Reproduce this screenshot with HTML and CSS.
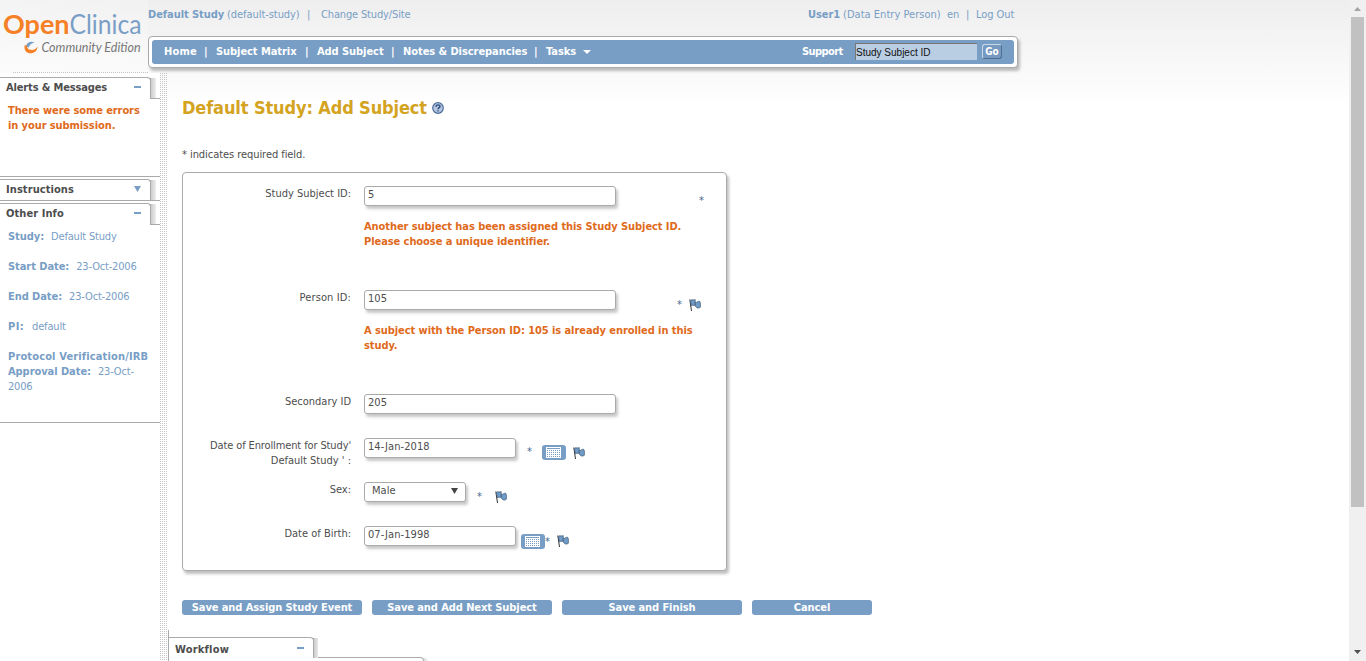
FILE: index.html
```html
<!DOCTYPE html>
<html lang="en">
<head>
<meta charset="utf-8">
<title>OpenClinica - Add Subject</title>
<link rel="stylesheet" href="styles.css">
</head>
<body>
<svg class="defs" width="0" height="0" aria-hidden="true">
  <defs>
    <symbol id="flag" viewBox="0 0 12 12">
      <path d="M.8 .5L2.500 12" stroke="#333" stroke-width="1" fill="none"/>
      <path d="M1.500 1.200C3 .2 4.500 1.600 6.200 .6V6C4.800 7.200 3.400 5.600 2.200 6.800Z" fill="#6f9bc8" stroke="#3f566e" stroke-width=".7"/>
      <path d="M6.400 3.200C7.500 4.200 9 1.500 10.800 2.400C11.700 4.500 11.500 6.500 11.300 8.300C9.800 9.500 8.200 9.500 6.300 7.300Z" fill="#6f9bc8" stroke="#3f566e" stroke-width=".7"/>
    </symbol>
    <pattern id="dots" width="2" height="2" patternUnits="userSpaceOnUse" x="4" y="4">
      <rect width="1" height="1" x="1" y="1" fill="#789ec5"/>
    </pattern>
    <symbol id="calendar" viewBox="0 0 24 15">
      <rect width="24" height="15" rx="3" fill="#789ec5"/>
      <rect x="4" y="2" width="15" height="11" fill="#fff"/>
      <rect x="5" y="3" width="13" height="1" fill="#789ec5"/>
      <rect x="4" y="4" width="14" height="8" fill="url(#dots)"/>
    </symbol>
  </defs>
</svg>
<div class="page">
  <header class="header">
    <div class="brand">
      <svg class="logo" width="148" height="73" viewBox="0 0 148 73">
        <text class="logo-open" x="3" y="34" textLength="66.500" lengthAdjust="spacingAndGlyphs">Open</text>
        <text class="logo-clinica" x="69.500" y="34" textLength="72" lengthAdjust="spacingAndGlyphs">Clinica</text>
        <path d="M24.500 45.500C24 51 27 53.300 30.500 53.300C34.500 53.300 37 51 37.700 46.500C35.500 49.500 33 50.300 30.500 49.800C27.500 49.200 26.500 47.500 27 45Z" fill="#f58025"/>
        <path d="M26.500 44.500C28.500 41.500 31.500 41 34.500 42.500C31.500 43.200 29.500 45 28.500 47.800C27.200 47 26.500 46 26.500 44.500Z" fill="#7a9ec6"/>
        <text class="logo-edition" x="41.500" y="51.500" textLength="99" lengthAdjust="spacingAndGlyphs">Community Edition</text>
      </svg>
    </div>
    <div class="header-main">
      <div class="topline">
        <a class="b">Default Study</a><span>(default-study)</span><span>|</span><a class="change">Change Study/Site</a>
        <a class="b">User1</a><span class="role">(Data Entry Person)</span><span>en</span><span>|</span><a>Log Out</a>
      </div>
      <div class="navbox">
        <nav class="nav">
          <a class="n-home">Home</a><i>|</i><a>Subject Matrix</a><i>|</i><a>Add Subject</a><i>|</i><a>Notes &amp; Discrepancies</a><i>|</i><a>Tasks</a>
          <svg width="8" height="4"><path d="M0 0H8L4 4Z" fill="#fff"/></svg>
          <a class="support">Support</a>
          <input class="search" value="Study Subject ID" aria-label="Search">
          <button class="go">Go</button>
        </nav>
      </div>
    </div>
  </header>
  <div class="body">
    <aside class="sidebar">
      <section class="panel alerts">
        <h2 class="tab tight"><span>Alerts &amp; Messages</span><b class="minus"></b></h2>
        <p class="alert">There were some errors<br>in your submission.</p>
      </section>
      <section class="panel instructions">
        <h2 class="tab"><span>Instructions</span><svg width="7" height="6"><path d="M0 0H7L3.500 6Z" fill="#789ec5"/></svg></h2>
      </section>
      <section class="panel info">
        <h2 class="tab"><span>Other Info</span><b class="minus"></b></h2>
        <dl class="facts">
          <div><dt>Study:</dt><dd>Default Study</dd></div>
          <div><dt>Start Date:</dt><dd>23-Oct-2006</dd></div>
          <div><dt>End Date:</dt><dd>23-Oct-2006</dd></div>
          <div><dt class="pi">PI:</dt><dd>default</dd></div>
          <div><dt><span class="wide">Protocol Verification/IRB</span><br>Approval Date:</dt><dd>23-Oct-<br>2006</dd></div>
        </dl>
      </section>
    </aside>
    <div class="divider"></div>
    <main class="main">
      <h1 class="title"><span>Default Study: Add Subject</span>
        <svg width="12" height="12" viewBox="0 0 12 12"><circle cx="6" cy="6" r="5.300" fill="#b4c6df" stroke="#4d6c9c" stroke-width="1.200"/><path d="M4 4.700C4 2.300 8.100 2.400 8 4.400C7.900 5.800 6.100 5.600 6.100 7.300M6.100 8.200V9.500" fill="none" stroke="#29497e" stroke-width="1.400"/></svg>
      </h1>
      <p class="note">* indicates required field.</p>
      <form class="form">
        <div class="row tall"><label>Study Subject ID:</label>
          <div class="field"><div class="line"><input class="text" value="5"><span class="star s1">*</span></div>
            <p class="error">Another subject has been assigned this Study Subject ID.<br>Please choose a unique identifier.</p></div></div>
        <div class="row tall"><label class="l-person">Person ID:</label>
          <div class="field"><div class="line"><input class="text" value="105"><span class="star s2">*</span><svg class="flag f2" width="12" height="12"><use href="#flag"/></svg></div>
            <p class="error">A subject with the Person ID: 105 is already enrolled in this<br>study.</p></div></div>
        <div class="row"><label>Secondary ID</label>
          <div class="field"><div class="line"><input class="text" value="205"></div></div></div>
        <div class="row"><label><span class="l-enroll">Date of Enrollment for Study'</span><br>Default&nbsp;Study ' :</label>
          <div class="field"><div class="line"><input class="text date" value="14-Jan-2018"><span class="star s4">*</span><svg class="cal c4" width="24" height="15"><use href="#calendar"/></svg><svg class="flag f4" width="12" height="12"><use href="#flag"/></svg></div></div></div>
        <div class="row"><label>Sex:</label>
          <div class="field"><div class="line"><div class="text select"><span>Male</span><svg width="7" height="6"><path d="M0 0H7L3.500 6Z" fill="#444"/></svg></div><span class="star s5">*</span><svg class="flag f5" width="12" height="12"><use href="#flag"/></svg></div></div></div>
        <div class="row"><label>Date of Birth:</label>
          <div class="field"><div class="line"><input class="text date" value="07-Jan-1998"><svg class="cal c6" width="24" height="15"><use href="#calendar"/></svg><span class="star s6">*</span><svg class="flag f6" width="12" height="12"><use href="#flag"/></svg></div></div></div>
      </form>
      <div class="actions">
        <button class="btn">Save and Assign Study Event</button>
        <button class="btn">Save and Add Next Subject</button>
        <button class="btn">Save and Finish</button>
        <button class="btn small">Cancel</button>
      </div>
      <section class="workflow">
        <h2 class="tab"><span>Workflow</span><b class="minus"></b></h2>
        <div class="wf-body"></div>
      </section>
    </main>
  </div>
</div>
<div class="scrollbar">
  <svg width="17" height="17"><path d="M5 11H12L8.500 7Z" fill="#a3a3a3"/></svg>
  <div class="thumb"></div>
  <svg class="down" width="17" height="17"><path d="M5 6H12L8.500 10Z" fill="#505050"/></svg>
</div>
</body>
</html>
```
FILE: styles.css
```css
* { box-sizing: border-box; }
body {
  margin: 0; width: 1366px; height: 661px; overflow: hidden; display: flex;
  font: 11px/15px "DejaVu Sans Condensed", "DejaVu Sans", sans-serif;
  font-stretch: condensed; color: #4d4d4d; background: #fff;
  letter-spacing: -0.06px;
}
.defs { position: absolute; }
h1, h2, p, dl, dd { margin: 0; }
input, button { font: inherit; letter-spacing: inherit; color: inherit; border: 0; padding: 0; margin: 0; }
svg { display: block; flex: none; }
a, span, label, dt, dd { white-space: nowrap; }
.page { width: 1349px; background: linear-gradient(#eee, #fff 108px); }
.header { display: flex; height: 73px; }
.brand { width: 148px; background: repeating-linear-gradient(90deg, #c4c4c4 0 1px, transparent 1px 2px) 13px 72px / 135px 1px no-repeat, linear-gradient(90deg, rgba(255,255,255,.35), rgba(255,255,255,.2)); }
.logo { overflow: visible; }
.logo-open { font: bold 27px Lato, sans-serif; fill: #f58025; letter-spacing: 0; }
.logo-clinica { font: 27px Lato, sans-serif; fill: #7a9ec6; letter-spacing: 0; }
.logo-edition { font: italic 12.5px Lato, sans-serif; fill: #777; letter-spacing: 0; }
.topline { display: grid; height: 36px; padding-top: 7px; color: #789ec5;
  grid-template-columns: 79px 80px 14px 487px 35px 104px 19px 10px 42px; }
.change { letter-spacing: -0.15px; }
.role { letter-spacing: 0.03px; }
.b { font-weight: bold; }
.navbox { width: 870px; height: 32px; padding: 3px; border: 1px solid #aaa; border-radius: 4px; background: #fff; box-shadow: 2px 3px 3px rgba(0,0,0,.25); }
.nav { height: 24px; padding: 0 0 1px 12px; border-radius: 3px; background: #789ec5; color: #fff; font-weight: bold;
  display: grid; align-items: center; grid-template-columns: 40px 12px 89px 12px 74px 12px 131px 12px 37px 219px 53px 127px 20px; }
.nav i { font-style: normal; }
.n-home { letter-spacing: 0.2px; }
.support { letter-spacing: -0.9px; }
.support { letter-spacing: -0.9px; font-size: 11px; }
.search { width: 122px; height: 17px; border-top: 1px solid #777; border-left: 1px solid #777; background: #b9cde3; color: #111; font: 10px "Liberation Sans", sans-serif; letter-spacing: 0; }
.go { width: 20px; height: 15px; line-height: 12px; border: 1px solid; border-color: #c8d8e8 #4f6f94 #4f6f94 #c8d8e8; border-radius: 3px; background: #7599c0; color: #fff; font-weight: bold; font-size: 10px; }
.nav .support { letter-spacing: -0.7px; letter-spacing: -0.6px; }
.body { display: flex; height: 588px; }
.sidebar { width: 160px; padding-top: 4px; background: #fff; }
.panel { border-bottom: 1px solid #aaa; }
.tab { position: relative; display: flex; justify-content: space-between; align-items: center; width: 151px; height: 21px; padding: 0 9px 2px 6px; border: 1px solid #aaa; border-width: 1px 1px 0 0; border-radius: 0 4px 0 0; font-size: 11px; color: #4d4d4d; background: #fff; letter-spacing: 0.08px; }
.tight { letter-spacing: -0.15px; }
.tab::after { content: ""; position: absolute; left: 100%; top: 0; width: 10px; height: 20px; border-bottom: 1px solid #aaa; background: linear-gradient(90deg, #aaa 1px, #ccc 1px, #eee 6px, #fff 6px); }
.minus { width: 7px; height: 2px; margin-top: -1px; background: #789ec5; }
.alerts { height: 100px; }
.instructions { height: 24px; padding-top: 2px; }
.info { height: 222px; padding-top: 2px; }
.alert { padding: 5px 8px; color: #e06a1b; font-weight: bold; letter-spacing: -0.09px; }
.facts { padding: 5px 8px; color: #789ec5; }
.facts div { margin-bottom: 15px; }
.facts dt, .facts dd { display: inline; }
.facts dt { font-weight: bold; margin-right: 7px; }
.facts dt.pi { letter-spacing: 0.4px; margin-right: 8px; }
.facts dd { letter-spacing: -0.18px; }
.wide { letter-spacing: 0.14px; }
.divider { width: 7px; background: repeating-linear-gradient(90deg, #c4c4c4 0 1px, transparent 1px 2px); -webkit-mask: repeating-linear-gradient(#000 0 1px, transparent 1px 2px); mask: repeating-linear-gradient(#000 0 1px, transparent 1px 2px); }
.main { flex: 1; padding: 23px 0 0 15px; }
.title { display: flex; align-items: center; gap: 5px; height: 24px; font-size: 18px; line-height: 24px; color: #d4a31f; letter-spacing: -0.12px; }
.note { margin-top: 27px; }
.form { width: 545px; height: 399px; margin-top: 10px; padding-top: 13px; border: 1px solid #aaa; border-radius: 4px; background: #fff; box-shadow: 2px 3px 3px rgba(0,0,0,.25); }
.row { display: grid; grid-template-columns: 168px 1fr; column-gap: 13px; height: 44px; }
.tall { height: 104px; }
.row label { text-align: right; letter-spacing: 0; }
.row .l-person { letter-spacing: 0.12px; }
.l-enroll { letter-spacing: -0.12px; }
.line { display: flex; height: 20px; }
.text { flex: none; width: 252px; height: 20px; padding: 0 0 3px 3px; border: 1px solid #aaa; border-radius: 3px; background: #fff; box-shadow: 2px 3px 3px rgba(0,0,0,.22); letter-spacing: 0.08px; }
.date { width: 152px; }
.select { width: 102px; display: flex; justify-content: space-between; align-items: center; padding: 0 7px 3px 7px; }
.star { width: 6px; color: #45688f; font-size: 11px; line-height: 15px; }
.s1 { margin: 7px 0 0 83px; }
.s2 { margin: 7px 0 0 61px; }
.f2 { margin: 9px 0 0 6px; }
.s4 { margin: 6px 0 0 11px; }
.c4 { margin: 7px 0 0 9px; }
.f4 { margin: 9px 0 0 7px; }
.s5 { margin: 7px 0 0 11px; }
.f5 { margin: 9px 0 0 12px; }
.c6 { margin: 8px 0 0 5px; }
.s6 { margin: 8px 0 0 0; }
.f6 { margin: 9px 0 0 6px; }
.error { margin-top: 13px; color: #e06a1b; font-weight: bold; letter-spacing: -0.07px; }
.actions { display: flex; gap: 10px; margin-top: 29px; }
.btn { width: 180px; height: 15px; line-height: 15px; border-radius: 3px; background: #789ec5; color: #fff; font-weight: bold; letter-spacing: -0.08px; }
.small { width: 120px; }
.workflow { margin: 15px 0 0 -14px; padding-top: 7px; height: 32px; border-left: 1px solid #aaa; }
.workflow .tab { width: 145px; padding: 2px 9px 0 6px; letter-spacing: 0.2px; }
.workflow .tab::after { width: 5px; border: 0; }
.workflow .minus { margin-top: -3px; }
.wf-body { width: 110px; height: 6px; margin: -1px 0 0 145px; border-top: 1px solid #aaa; border-right: 1px solid #aaa; border-radius: 0 4px 0 0; box-shadow: 4px 0 2px -1px #ddd; }
.scrollbar { display: flex; flex-direction: column; width: 17px; background: #f0f0f0; }
.thumb { width: 13px; height: 490px; margin-left: 2px; background: #c1c1c1; }
.down { margin-top: auto; }
```
